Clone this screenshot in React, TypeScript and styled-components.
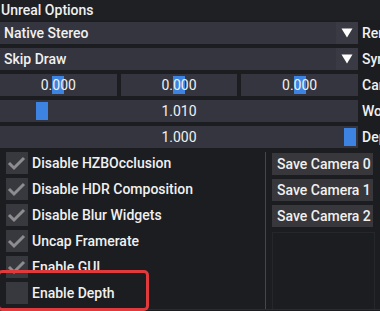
import React from "react";
import styled, { createGlobalStyle } from "styled-components";

const Global = createGlobalStyle`
  html, body { margin: 0; padding: 0; background: #1c1d20; overflow: hidden; }
  body { font-family: Roboto, "Noto Sans", "Liberation Sans", sans-serif; color: #f0f0f0; }
`;

const Window = styled.div`
  position: relative;
  width: 380px;
  height: 311px;
  overflow: hidden;
  display: flex;
  flex-direction: column;
  background: #1c1d20;
`;

const TitleBar = styled.div`
  height: 20px;
  line-height: 20px;
  padding-left: 1px;
  font-size: 14px;
  font-weight: 500;
  background: #1f2023;
  white-space: nowrap;
`;

const Body = styled.div`
  display: flex;
  flex-direction: column;
  gap: 4px;
  padding-top: 2px;
`;

const Row = styled.div`
  display: grid;
  grid-template-columns: 358px 1fr;
  column-gap: 4px;
  height: 22px;
  align-items: center;
`;

const Label = styled.div`
  font-size: 14px;
  font-weight: 500;
  white-space: nowrap;
  overflow: visible;
`;

const Combo = styled.div`
  display: flex;
  height: 22px;
  background: #35353f;
`;

const ComboText = styled.div`
  flex: 1;
  padding-left: 4px;
  line-height: 22px;
  font-size: 14px;
  font-weight: 500;
`;

const ArrowBox = styled.div`
  width: 22px;
  display: flex;
  align-items: center;
  justify-content: center;
  background: #3a3a44;
`;

const DragGroup = styled.div`
  display: grid;
  grid-template-columns: repeat(3, 1fr);
  column-gap: 4px;
  height: 22px;
`;

const Frame = styled.div`
  position: relative;
  height: 22px;
  background: #35353f;
  display: flex;
  align-items: center;
  justify-content: center;
  font-size: 14px;
`;

const Grab = styled.div`
  position: absolute;
  top: 2px;
  bottom: 2px;
  width: 12px;
  background: #3d84e2;
`;

const Value = styled.span`
  position: relative;
  z-index: 1;
`;

const Lower = styled.div`
  display: flex;
  margin-top: 4px;
  height: 157px;
  border-bottom: 1px solid #2a2b2e;
`;

const LeftCol = styled.div`
  width: 266px;
  display: flex;
  flex-direction: column;
  gap: 4px;
  padding-left: 6px;
  box-sizing: border-box;
  border-right: 1px solid #46464a;
`;

const CheckRow = styled.div`
  display: flex;
  align-items: center;
  gap: 4px;
  height: 22px;
`;

const Box = styled.div`
  width: 22px;
  height: 22px;
  background: #38383f;
  display: flex;
  align-items: center;
  justify-content: center;
`;

const CheckLabel = styled.span`
  font-size: 14px;
  font-weight: 500;
  white-space: nowrap;
`;

const RightCol = styled.div`
  flex: 1;
  display: flex;
  flex-direction: column;
  gap: 4px;
  padding: 1px 5px 0 6px;
`;

const Button = styled.div`
  height: 22px;
  width: 101px;
  line-height: 22px;
  padding-left: 5px;
  box-sizing: border-box;
  background: #37373c;
  font-size: 14px;
  font-weight: 500;
  white-space: nowrap;
`;

const ChildArea = styled.div`
  flex: 1;
  margin-top: 1px;
  border: 1px solid #26272a;
  border-bottom: none;
`;

const Highlight = styled.div`
  position: absolute;
  left: -3px;
  top: 270px;
  width: 146px;
  height: 35px;
  border: 3px solid #e03a3c;
  border-radius: 5px;
  pointer-events: none;
`;

const Arrow = () => (
  <svg width="12" height="10" viewBox="0 0 12 10">
    <polygon points="0.5,0.5 11.5,0.5 6,9.5" fill="#ffffff" />
  </svg>
);

const Check = () => (
  <svg width="22" height="22" viewBox="0 0 22 22">
    <polyline points="3,11 8,16 18,6" fill="none" stroke="#8d8d90" strokeWidth="3" />
  </svg>
);

const checks: [string, boolean][] = [
  ["Disable HZBOcclusion", true],
  ["Disable HDR Composition", true],
  ["Disable Blur Widgets", true],
  ["Uncap Framerate", true],
  ["Enable GUI", true],
  ["Enable Depth", false],
];

export default function App() {
  return (
    <>
      <Global />
      <Window>
        <TitleBar>Unreal Options</TitleBar>
        <Body>
          <Row>
            <Combo>
              <ComboText>Native Stereo</ComboText>
              <ArrowBox><Arrow /></ArrowBox>
            </Combo>
            <Label>Render Mode</Label>
          </Row>
          <Row>
            <Combo>
              <ComboText>Skip Draw</ComboText>
              <ArrowBox><Arrow /></ArrowBox>
            </Combo>
            <Label>Sync Mode</Label>
          </Row>
          <Row>
            <DragGroup>
              {[0, 1, 2].map((i) => (
                <Frame key={i}>
                  <Grab style={{ left: "calc(50% - 6px)" }} />
                  <Value>0.000</Value>
                </Frame>
              ))}
            </DragGroup>
            <Label>Camera Offset</Label>
          </Row>
          <Row>
            <Frame>
              <Grab style={{ left: "36px" }} />
              <Value>1.010</Value>
            </Frame>
            <Label>World Scale</Label>
          </Row>
          <Row>
            <Frame>
              <Grab style={{ left: "344px" }} />
              <Value>1.000</Value>
            </Frame>
            <Label>Depth Scale</Label>
          </Row>
        </Body>
        <Lower>
          <LeftCol>
            {checks.map(([label, on]) => (
              <CheckRow key={label}>
                <Box>{on && <Check />}</Box>
                <CheckLabel>{label}</CheckLabel>
              </CheckRow>
            ))}
          </LeftCol>
          <RightCol>
            <Button>Save Camera 0</Button>
            <Button>Save Camera 1</Button>
            <Button>Save Camera 2</Button>
            <ChildArea />
          </RightCol>
        </Lower>
        <Highlight />
      </Window>
    </>
  );
}
